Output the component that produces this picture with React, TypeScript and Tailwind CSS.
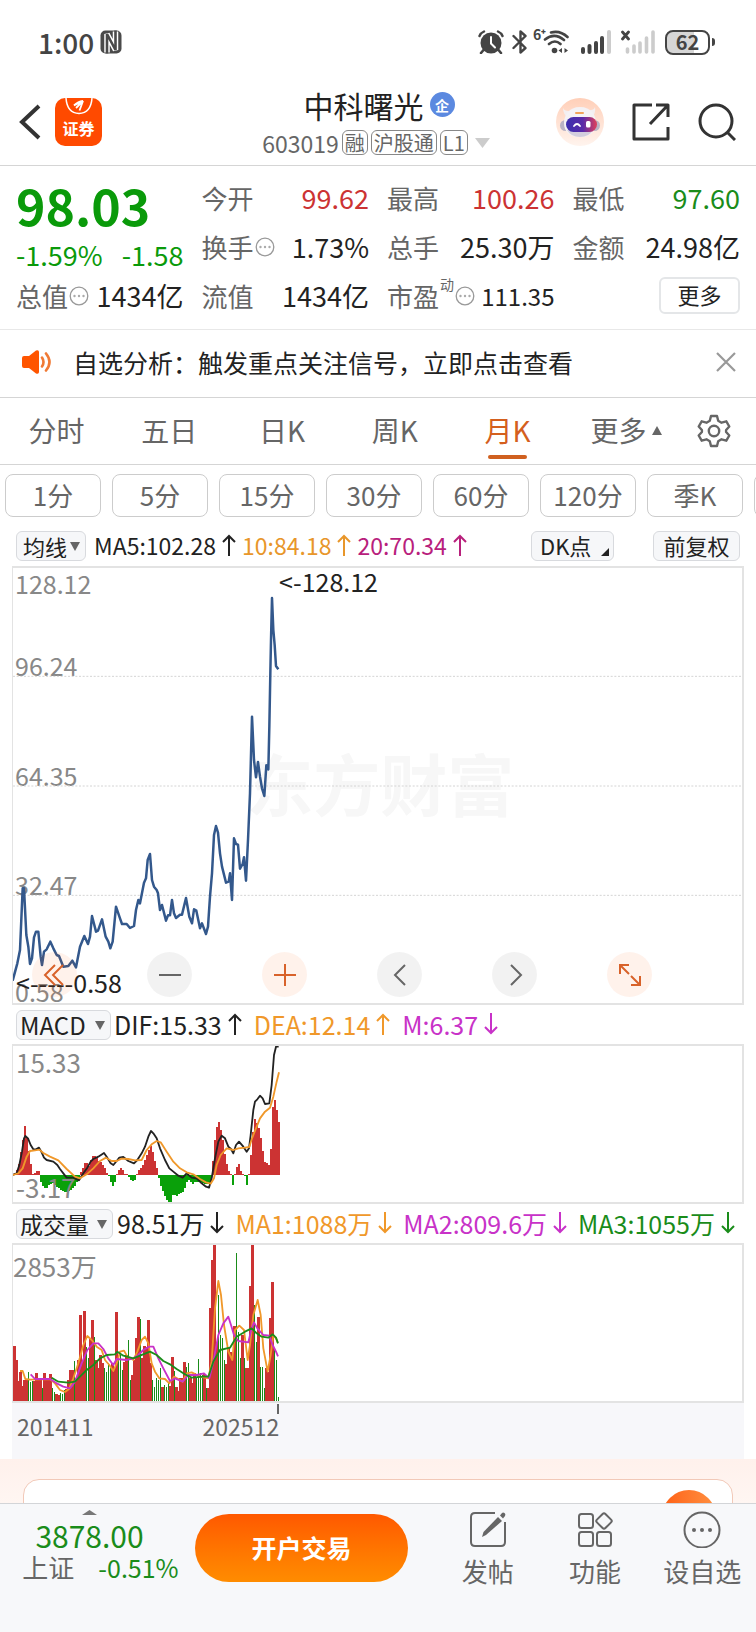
import React, { useState } from "react";
import clsx from "clsx";

type Bar = [number, "r" | "g"];

const periods = ["1分", "5分", "15分", "30分", "60分", "120分", "季K"];
const tabs = ["分时", "五日", "日K", "周K", "月K"];

// All chart data is kept in plot units, three per pixel, one month every 6 units
const pricePoints =
  "38,1262 52,1210 60,1170 68,985 72,985 79,1125 85,1160 90,1212 96,1195 102,1132 108,1115 115,1115 122,1190 126,1215 132,1175 140,1168 151,1145 160,1165 170,1185 177,1188 190,1220 205,1218 217,1202 228,1222 240,1160 253,1128 264,1152 270,1130 276,1068 288,1115 294,1112 306,1078 317,1130 325,1145 331,1165 338,1145 348,1040 360,1075 366,1092 380,1092 390,1104 402,1098 408,1050 415,1020 420,1030 432,968 438,955 443,900 450,882 456,960 462,980 470,990 474,1000 480,1050 486,1035 498,1082 504,1066 510,1066 516,1020 522,1060 528,1074 540,1064 546,1064 558,1014 568,1070 576,1090 582,1048 589,1052 600,1105 606,1090 618,1122 624,1100 630,1010 636,940 642,825 648,798 654,818 660,880 666,920 678,968 686,965 690,940 696,1020 702,835 708,852 714,854 720,926 728,912 732,892 738,962 744,840 750,700 756,470 762,600 768,652 774,606 780,650 786,685 793,708 799,616 805,628 808,500 811,340 813,240 816,114 820,210 824,255 828,318 835,328";

const macdBars = [
  4, 6, 14, 32, 68, 105, 147, 115, 72, 32, 4, 6, 12, 12, -22, -32, -38, -38,
  -30, -28, -25, -30, -36, -40, -45, -48, -50, -50, -48, -45, -40, -32, -22,
  -12, 10, 20, 36, 35, 28, 45, 56, 56, 52, 42, 40, 30, 22, 6, -3, -22, -32,
  -22, 3, 14, 22, 14, 4, 2, -6, -14, -17, -16, 2, 14, 20, 30, 45, 60, 74, 88,
  68, 42, 20, -8, -32, -48, -62, -76, -82, -80, -60, -60, -62, -58, -55, -50,
  -40, -22, -16, -22, -28, -22, -20, -20, -22, -24, -26, -28, -28, -20, 42,
  105, 145, 160, 135, 105, 62, 32, 12, 3, -30, 3, 24, 32, 12, 3, -3, -30, 2,
  60, 130, 168, 155, 140, 110, 72, 38, 36, 30, 78, 205, 225, 195, 160,
];

const difPoints =
  "38,510 50,505 58,480 66,440 72,400 76,393 84,400 92,420 100,433 108,433 117,428 124,440 132,458 140,465 160,470 172,480 180,492 190,505 200,518 220,518 237,526 250,505 262,488 272,470 280,462 295,455 312,444 320,455 332,475 340,480 350,468 358,458 370,456 385,468 402,475 412,465 425,445 435,425 445,395 453,378 460,385 470,400 480,430 495,465 508,490 520,500 535,512 548,518 560,505 575,518 590,520 605,535 618,545 627,548 635,520 645,460 655,410 665,392 675,400 685,425 693,432 700,445 708,420 717,410 730,425 740,440 747,430 752,390 760,315 765,290 772,283 780,272 788,280 795,297 808,295 815,240 822,150 828,125 836,125";

const deaPoints =
  "38,510 55,505 68,490 80,455 90,438 105,436 118,434 130,444 150,455 175,466 200,492 225,515 240,520 260,508 280,490 300,468 318,458 335,468 350,468 365,461 385,462 405,466 425,465 440,435 455,418 470,408 482,412 500,440 520,470 540,490 560,502 580,508 600,522 618,532 632,536 642,520 650,480 662,450 680,430 700,435 715,430 735,428 748,426 756,400 768,370 780,340 795,320 810,308 820,275 830,230 837,202";

const volumeBars: Bar[] = [
  [332, "r"], [332, "r"], [376, "r"], [438, "r"], [410, "r"], [453, "r"], [435, "r"], [436, "r"],
  [412, "g"], [440, "g"], [438, "g"], [438, "r"], [415, "r"], [435, "r"], [432, "r"], [458, "g"],
  [415, "r"], [432, "r"], [432, "r"], [418, "r"], [460, "g"], [470, "g"], [478, "r"], [480, "r"],
  [475, "g"], [478, "g"], [465, "g"], [462, "r"], [435, "r"], [405, "r"], [405, "r"], [378, "g"],
  [430, "r"], [375, "r"], [240, "r"], [375, "r"], [228, "r"], [335, "g"], [370, "g"], [312, "r"],
  [255, "r"], [305, "g"], [375, "r"], [400, "r"], [360, "r"], [385, "r"], [400, "g"], [412, "g"],
  [385, "g"], [400, "g"], [385, "r"], [400, "r"], [232, "r"], [370, "g"], [360, "g"], [405, "g"],
  [380, "r"], [360, "r"], [315, "g"], [435, "g"], [420, "r"], [375, "r"], [308, "r"], [245, "r"],
  [252, "g"], [370, "r"], [332, "r"], [335, "r"], [255, "r"], [385, "r"], [435, "g"], [455, "g"],
  [430, "g"], [435, "g"], [398, "g"], [455, "r"], [450, "g"], [455, "g"], [440, "g"], [452, "r"],
  [366, "r"], [408, "g"], [455, "r"], [468, "r"], [430, "r"], [430, "r"], [382, "r"], [395, "g"],
  [385, "g"], [430, "r"], [445, "r"], [415, "r"], [430, "g"], [373, "g"], [415, "g"], [420, "g"],
  [418, "r"], [458, "g"], [458, "r"], [220, "r"], [75, "r"], [28, "r"], [320, "r"], [180, "g"],
  [300, "g"], [310, "g"], [375, "g"], [388, "r"], [340, "r"], [350, "r"], [375, "r"], [272, "r"],
  [55, "g"], [290, "g"], [370, "g"], [300, "r"], [370, "g"], [400, "r"], [400, "r"], [152, "r"],
  [28, "r"], [210, "g"], [320, "g"], [245, "r"], [395, "g"], [395, "g"], [458, "g"], [400, "r"],
  [410, "r"], [250, "r"], [140, "r"], [345, "g"], [375, "g"], [485, "g"],
];

const volumeLines = [
  {
    color: "#f0982a",
    points:
      "60,408 68,408 76,432 90,434 150,432 165,445 180,465 195,471 207,462 220,430 235,385 250,330 262,303 275,315 290,335 305,345 315,375 328,390 340,408 352,380 360,350 372,347 382,365 400,375 412,350 425,315 435,305 445,325 455,385 465,410 478,430 495,432 508,445 522,425 548,440 560,415 575,412 600,425 625,430 635,380 645,220 655,138 663,180 672,270 685,350 697,375 705,285 718,272 732,285 743,375 750,330 760,240 773,195 782,240 790,340 803,410 812,360 820,300 828,310 833,322",
  },
  {
    color: "#c832c8",
    points:
      "92,418 105,432 150,432 170,445 190,455 210,460 225,440 245,385 262,345 280,325 295,325 310,342 325,370 340,390 350,372 380,375 400,370 415,360 430,345 448,335 460,335 475,370 490,400 510,438 525,430 548,440 565,420 590,420 612,415 628,430 640,380 655,300 670,265 685,245 693,270 702,300 715,318 745,322 755,280 762,262 772,280 790,300 808,302 818,330 828,350 834,364",
  },
  {
    color: "#1a8c1a",
    points:
      "155,428 175,440 205,443 225,440 240,425 260,405 280,390 300,370 320,360 345,358 352,350 370,362 400,370 420,362 450,350 470,360 490,378 510,388 530,402 550,415 575,428 610,425 625,425 640,380 660,345 690,338 710,305 735,290 755,280 770,295 785,305 805,308 818,298 828,308 834,325",
  },
];

export default function App() {
  return (
    <div className="flex min-h-screen flex-col overflow-hidden bg-white font-['Noto_Sans_CJK_SC',sans-serif] text-[#222]">
      <StatusBar />
      <Header />
      <Quote />
      <Notice />
      <ChartTabs />
      <Periods />
      <main className="px-3">
        <PricePanel />
        <MacdPanel />
        <VolumePanel />
      </main>
      <Promo />
      <BottomBar />
    </div>
  );
}

const StatusBar = () => (
  <div className="flex h-20 items-center justify-between pt-1 pr-[41px] pl-[38px] text-[#444]">
    <div className="flex items-center gap-1.5">
      <span className="text-[28px] leading-8 font-medium">1:00</span>
      <svg width="22" height="24" viewBox="0 0 22 24">
        <defs>
          <clipPath id="nfc">
            <rect x="0.500" y="0.500" width="21" height="23" rx="5" />
          </clipPath>
        </defs>
        <g clipPath="url(#nfc)" fill="none">
          <rect width="22" height="24" fill="#4a4a4a" />
          <path d="M7 22.500V4l8.500 16V1.500" stroke="#fff" strokeWidth="5.500" />
          <path d="M7 24V4l8.500 16V0" stroke="#4a4a4a" strokeWidth="2.600" />
        </g>
      </svg>
    </div>
    <div className="flex items-center gap-2">
      <svg width="26" height="24" viewBox="0 0 26 24" fill="none" stroke="#444">
        <circle cx="13" cy="13" r="10.500" fill="#444" stroke="none" />
        <path d="M1.500 6Q2.500 3 6 1.500M24.500 6Q23.500 3 20 1.500" strokeWidth="2.400" strokeLinecap="round" />
        <path d="M5.500 20l-2.500 3M20.500 20l2.500 3" strokeWidth="2.600" strokeLinecap="round" />
        <path d="M13 7v6.500l4 4" stroke="#fff" strokeWidth="2" strokeLinecap="round" />
      </svg>
      <svg width="15" height="24" viewBox="0 0 15 24" fill="none" stroke="#444" strokeWidth="2.400" strokeLinejoin="round" strokeLinecap="round">
        <path d="M1.500 6l12 12-5 4.500v-21l5 4.500-12 12" />
      </svg>
      <div className="relative ml-2">
        <span className="absolute -top-1 -left-2.5 text-sm leading-4 font-bold">6⁺</span>
        <svg width="26" height="24" viewBox="0 0 26 24" fill="none" stroke="#444" strokeWidth="2.600" strokeLinecap="round">
          <path d="M8 2.500Q17 0 24.500 7M2 9.500Q11.500 2 21 10M6 14Q12 9 17.500 14" />
          <circle cx="11.500" cy="20.500" r="2.800" fill="#444" stroke="none" />
          <path d="M19 18v5l-3.500-2.500zM21.500 18v5l3.500-2.500z" fill="#444" stroke="none" />
        </svg>
      </div>
      <svg className="ml-1" width="30" height="24" viewBox="0 0 30 24" strokeWidth="4" strokeLinecap="round">
        <path d="M2 19v3M8.500 16v6M15 13v9M21 8v14" stroke="#444" />
        <path d="M28 2v20" stroke="#ccc" />
      </svg>
      <svg className="mx-0.5" width="34" height="24" viewBox="0 0 34 24" strokeLinecap="round">
        <path d="M1.500 2l6 7M7.500 2l-6 7" stroke="#444" strokeWidth="2.800" />
        <path d="M6.500 19v3M13 16v6M19 13v9M25.500 8v14M32 2v20" stroke="#ccc" strokeWidth="3.600" />
      </svg>
      <div className="flex items-center gap-0.5">
        <div className="flex h-[25px] w-[45px] items-center justify-center rounded-lg border-2 border-[#444] bg-linear-to-r from-[#d6d6d6] from-65% to-white to-65% text-[20px] leading-5 font-bold">
          62
        </div>
        <div className="h-2 w-[3px] rounded-r bg-[#444]" />
      </div>
    </div>
  </div>
);

const Header = () => (
  <header className="grid h-[86px] grid-cols-[1fr_auto_1fr] items-center border-b border-[#d5d5d5] pr-5 pb-0.5 pl-4">
    <div className="flex items-center gap-3.5">
      <button aria-label="返回">
        <svg width="25" height="36" viewBox="0 0 25 36" fill="none" stroke="#333" strokeWidth="4">
          <path d="M23 2L6 18l17 16" />
        </svg>
      </button>
      <button className="relative flex h-12 w-[47px] justify-center overflow-hidden rounded-[10px] bg-[#ff4a00] pt-4 text-white">
        <svg className="absolute top-0" width="28" height="17" viewBox="0 0 28 17" fill="none" stroke="#fff" strokeWidth="1.500">
          <path d="M1 0q1 15 13 15.500Q26 15 27 0" />
          <path d="M9 7.500q4-4 9-4.500l-9 4.500M11 10l7-7-3.500 9.500" strokeWidth="1.800" />
        </svg>
        <span className="text-base leading-7 font-bold">证券</span>
      </button>
    </div>
    <div className="flex flex-col items-center gap-1.5">
      <div className="flex items-center gap-1.5 pl-1.5">
        <h1 className="text-[30px] leading-9">中科曙光</h1>
        <span className="flex size-[25px] items-center justify-center rounded-full bg-[#5b89e0] text-sm leading-4 font-bold text-white">
          企
        </span>
      </div>
      <div className="flex items-center gap-[3px] text-[#666]">
        <span className="text-[23px] leading-7">603019</span>
        {["融", "沪股通", "L1"].map((tag) => (
          <span
            key={tag}
            className="flex h-[25px] items-center rounded-md border border-[#888] px-0.5 text-[20px] leading-5"
          >
            {tag}
          </span>
        ))}
        <svg className="ml-1" width="15" height="10" viewBox="0 0 15 10">
          <path d="M0 0h15L7.500 10z" fill="#ccc" />
        </svg>
      </div>
    </div>
    <div className="flex items-center justify-end gap-7">
      <button aria-label="智能助手">
        <svg width="48" height="48" viewBox="0 0 48 48">
          <defs>
            <linearGradient id="halo" x1="0" y1="0" x2="0" y2="1">
              <stop offset="0" stopColor="#ffcfb8" />
              <stop offset="1" stopColor="#fff4ee" />
            </linearGradient>
            <linearGradient id="visor">
              <stop offset="0" stopColor="#3b2fae" />
              <stop offset="0.550" stopColor="#5a2aa8" />
              <stop offset="1" stopColor="#e0405a" />
            </linearGradient>
          </defs>
          <circle cx="24" cy="24" r="24" fill="url(#halo)" />
          <path d="M7 10q0 6 5 10l5-7q-8 1-10-3zM39 9q1 6-3 10l-6-7q8 1 9-3z" fill="#f3eff1" />
          <rect x="4" y="22" width="40" height="11" rx="5.500" fill="#b9b3c4" />
          <path d="M24 9C13 9 8 17 8 25s5 14 16 14 16-6 16-14S35 9 24 9z" fill="#f4f2f5" />
          <path d="M11 32q4 7 13 7t13-7z" fill="#d3cedd" />
          <rect x="19" y="14" width="9" height="2" rx="1" fill="#f0a35c" />
          <rect x="10" y="19" width="31" height="15" rx="7.500" fill="url(#visor)" />
          <path d="M18 28q3-4 6 0" fill="none" stroke="#fff" strokeWidth="1.800" strokeLinecap="round" />
          <rect x="30" y="23" width="4.500" height="6.500" rx="1.500" fill="#fff" />
        </svg>
      </button>
      <button aria-label="分享">
        <svg width="38" height="38" viewBox="0 0 38 38" fill="none" stroke="#333" strokeWidth="3">
          <path d="M20 2H2v34h34V24M24 2h12v12M36 2L18 21" strokeLinejoin="round" />
        </svg>
      </button>
      <button aria-label="搜索">
        <svg width="38" height="38" viewBox="0 0 38 38" fill="none" stroke="#333" strokeWidth="3">
          <circle cx="18" cy="18" r="16" />
          <path d="M29 29l8 8" />
        </svg>
      </button>
    </div>
  </header>
);

const Dots = () => (
  <svg width="20" height="20" viewBox="0 0 20 20" fill="#aaa">
    <circle cx="10" cy="10" r="8.800" fill="none" stroke="#999" strokeWidth="1.300" />
    <circle cx="5.500" cy="10" r="1.200" />
    <circle cx="10" cy="10" r="1.200" />
    <circle cx="14.500" cy="10" r="1.200" />
  </svg>
);

interface CellProps {
  label: string;
  value: string;
  tone?: string;
  dots?: boolean;
}

const Cell = ({ label, value, tone, dots }: CellProps) => (
  <div className="flex items-center justify-between whitespace-nowrap">
    <span className="flex items-center gap-px text-[26px] text-[#666]">
      {label}
      {dots && <Dots />}
    </span>
    <span className={clsx("text-[27px]", tone)}>{value}</span>
  </div>
);

const Quote = () => (
  <section className="grid grid-cols-4 grid-rows-[49px_49px_49px] gap-x-[18px] border-b border-[#e8e8e8] px-4 pt-[7px] pb-[9px] leading-8">
    <div className="row-span-2 flex flex-col justify-between text-[#0a9a0a]">
      <strong className="pt-1 text-[50px] leading-[54px] font-bold">98.03</strong>
      <div className="flex justify-between text-[27px] leading-8 whitespace-nowrap">
        <span>-1.59%</span>
        <span>-1.58</span>
      </div>
    </div>
    <Cell label="今开" value="99.62" tone="text-[#cc3333]" />
    <Cell label="最高" value="100.26" tone="text-[#cc3333]" />
    <Cell label="最低" value="97.60" tone="text-[#1a8c1a]" />
    <Cell label="换手" value="1.73%" dots />
    <Cell label="总手" value="25.30万" />
    <Cell label="金额" value="24.98亿" />
    <Cell label="总值" value="1434亿" dots />
    <Cell label="流值" value="1434亿" />
    <div className="flex items-center justify-between whitespace-nowrap">
      <span className="flex items-center gap-px text-[26px] text-[#666]">
        市盈
        <sup className="-top-3 text-sm leading-4">动</sup>
        <Dots />
      </span>
      <span className="text-[24px]">111.35</span>
    </div>
    <button className="h-[37px] w-[81px] self-center justify-self-end rounded-md border-2 border-[#e4e6e8] pb-1 text-[22px] leading-7">
      更多
    </button>
  </section>
);

const Notice = () => {
  const [open, setOpen] = useState(true);
  if (!open) return null;
  return (
    <div className="flex h-[68px] items-center border-b border-[#d5d5d5] pr-5 pb-1 pl-[22px]">
      <svg width="30" height="24" viewBox="0 0 30 24">
        <path d="M0 8q0-2 2-2h5l7-5.500q3-1 3 1.500v20q0 2.500-3 1.500L7 18H2q-2 0-2-2z" fill="#ff5500" />
        <path d="M20 7.500q3 4.500 0 9M24 3.500q7 8.500 0 17" fill="none" stroke="#f07a35" strokeWidth="2.600" strokeLinecap="round" />
      </svg>
      <p className="ml-[21px] flex-1 text-[25px] leading-9">自选分析：触发重点关注信号，立即点击查看</p>
      <button aria-label="关闭" onClick={() => setOpen(false)}>
        <svg width="20" height="20" viewBox="0 0 20 20" stroke="#999" strokeWidth="2.200">
          <path d="M1 1l18 18M19 1L1 19" />
        </svg>
      </button>
    </div>
  );
};

const ChartTabs = () => {
  const [active, setActive] = useState("月K");
  return (
    <nav className="flex h-[67px] border-b border-[#d5d5d5] pr-1 text-[28px] leading-9 text-[#666]">
      {tabs.map((tab) => (
        <button
          key={tab}
          onClick={() => setActive(tab)}
          className={clsx("relative flex-3 pb-0.5", active === tab && "text-[#d45f1e]")}
        >
          {tab}
          {active === tab && (
            <span className="absolute inset-x-0 bottom-[5px] mx-auto h-1 w-[39px] rounded-full bg-[#d0601f]" />
          )}
        </button>
      ))}
      <button className="flex flex-3 items-center justify-center gap-1.5 pb-0.5">
        <span className="ml-3">更多</span>
        <svg width="10" height="9" viewBox="0 0 10 9">
          <path d="M5 0l5 9H0z" fill="#666" />
        </svg>
      </button>
      <button aria-label="设置" className="flex flex-2 items-center justify-center">
        <svg width="34" height="34" viewBox="0 0 34 34" fill="none" stroke="#666" strokeWidth="2.400" strokeLinejoin="round">
          <path d="M14 2h6l1.200 4.800 3.300 1.900 4.800-1.400 3 5.200-3.200 3.500v2l3.200 3.500-3 5.200-4.800-1.400-3.300 1.900L20 32h-6l-1.200-4.800-3.300-1.900-4.800 1.400-3-5.200L4.900 18v-2l-3.200-3.500 3-5.200 4.800 1.400 3.300-1.900z" />
          <circle cx="17" cy="17" r="5.200" />
        </svg>
      </button>
    </nav>
  );
};

const Periods = () => (
  <div className="flex gap-[11px] overflow-hidden pt-[9px] pl-[5px]">
    {periods.map((p) => (
      <button
        key={p}
        className="h-[43px] w-24 shrink-0 rounded-lg border border-[#ccc] pb-0.5 text-[26px] leading-9 text-[#666]"
      >
        {p}
      </button>
    ))}
    <button aria-label="年K" className="h-[43px] w-24 shrink-0 rounded-lg border border-[#ccc]" />
  </div>
);

const Picker = ({ name, size }: { name: string; size: string }) => (
  <div className="relative flex h-[30px] items-center">
    <select
      aria-label={name}
      className={clsx(
        "h-[30px] appearance-none rounded-md border border-[#d8dade] bg-[#f6f7f9] pb-0.5 leading-7",
        size
      )}
    >
      <option>{name}</option>
    </select>
    <svg className="pointer-events-none absolute right-1.5" width="10" height="9" viewBox="0 0 10 9">
      <path d="M0 0h10L5 9z" fill="#666" />
    </svg>
  </div>
);

const Arrow = ({ down }: { down?: boolean }) => (
  <svg className="ml-1.5" width="14" height="22" viewBox="0 0 14 22" fill="none" stroke="currentColor" strokeWidth="2">
    <path d={down ? "M7 0v20M1 14l6 6 6-6" : "M7 22V2M1 8l6-6 6 6"} />
  </svg>
);

interface ReadingProps {
  children: React.ReactNode;
  tone?: string;
  down?: boolean;
}

const Reading = ({ children, tone, down }: ReadingProps) => (
  <span className={clsx("flex items-center whitespace-nowrap", tone)}>
    {children}
    <Arrow down={down} />
  </span>
);

const RoundButton = ({ label, warm, d }: { label: string; warm?: boolean; d: string }) => (
  <button
    aria-label={label}
    className={clsx(
      "flex size-[45px] items-center justify-center rounded-full",
      warm ? "bg-[#ff5500]/8 text-[#d8622a]" : "bg-black/5 text-[#666]"
    )}
  >
    <svg width="24" height="24" viewBox="0 0 24 24" fill="none" stroke="currentColor" strokeWidth="2">
      <path d={d} />
    </svg>
  </button>
);

const PricePanel = () => (
  <section>
    <div className="flex items-center pt-3.5 pr-1 pb-[5px] pl-1 text-[22px] leading-[30px]">
      <Picker name="均线" size="w-[70px] pl-1.5 text-[22px]" />
      <div className="ml-2 flex flex-1 gap-1.5 pb-0.5 text-[23px] leading-7">
        <Reading>MA5:102.28</Reading>
        <Reading tone="text-[#e8962a]">10:84.18</Reading>
        <Reading tone="text-[#b8207c]">20:70.34</Reading>
      </div>
      <button className="relative mr-[39px] h-[30px] w-[83px] rounded-md border border-[#d8dade] bg-[#f6f7f9] pb-0.5 pl-2 text-left leading-[26px]">
        DK点
        <svg className="absolute right-1 bottom-1" width="8" height="8" viewBox="0 0 8 8">
          <path d="M8 0v8H0z" fill="#222" />
        </svg>
      </button>
      <button className="h-[30px] w-[87px] rounded-md border border-[#d8dade] bg-[#f6f7f9] pb-0.5 leading-[26px]">
        前复权
      </button>
    </div>
    <div className="relative h-[439px] border-2 border-l border-[#e3e3e3] text-[25px] leading-6 text-[#888]">
      <div className="absolute top-[178px] left-[32%] text-[67px] leading-[72px] font-bold whitespace-nowrap text-[#f7f7f7]">
        东方财富
      </div>
      <span className="absolute top-[3px] left-0.5">128.12</span>
      <span className="absolute top-[85px] left-0.5">96.24</span>
      <span className="absolute top-[195px] left-0.5">64.35</span>
      <span className="absolute top-[304px] left-0.5">32.47</span>
      <span className="absolute top-[411px] left-0.5">0.58</span>
      <svg className="absolute inset-0 size-full" viewBox="39 24 2187 1305" preserveAspectRatio="none">
        {[349, 678, 1006].map((y) => (
          <path key={y} d={`M39 ${y}H2226`} stroke="#d4d4d4" strokeWidth="3" strokeDasharray="6 5" />
        ))}
        <polyline points={pricePoints} fill="none" stroke="#33588c" strokeWidth="7.500" strokeLinejoin="round" />
      </svg>
      <span className="absolute top-px left-[36.5%] text-[#222]">&lt;-128.12</span>
      <span className="absolute top-[402px] left-[3px] text-[#222]">&lt;-----0.58</span>
      <div className="absolute bottom-1.5 left-[19px] flex gap-[70px]">
        <RoundButton label="最早" warm d="M12 2L2 12l10 10M20 2L10 12l10 10" />
        <RoundButton label="缩小" d="M1 12h22" />
        <RoundButton label="放大" warm d="M1 12h22M12 1v22" />
        <RoundButton label="向左" d="M17 2L7 12l10 10" />
        <RoundButton label="向右" d="M8 2l10 10L8 22" />
        <RoundButton label="全屏" warm d="M11 2H2v9M2 2l9 9M13 22h9v-9M22 22l-9-9" />
      </div>
    </div>
  </section>
);

const MacdPanel = () => (
  <section>
    <div className="flex items-center gap-[3px] pt-[5px] pb-1 pl-1 leading-[30px]">
      <Picker name="MACD" size="w-[95px] pl-[3px] text-[24px]" />
      <div className="flex gap-3 pb-0.5 text-[25px] leading-7">
        <Reading>DIF:15.33</Reading>
        <Reading tone="text-[#f0982a]">DEA:12.14</Reading>
        <Reading tone="text-[#c832c8]" down>M:6.37</Reading>
      </div>
    </div>
    <div className="relative h-40 border-2 border-l border-[#e3e3e3] text-[26px] leading-6 text-[#888]">
      <svg className="absolute inset-0 size-full" viewBox="39 123 2187 468" preserveAspectRatio="none">
        {macdBars.map((v, i) => (
          <rect
            key={i}
            x={36 + i * 6}
            y={v > 0 ? 510 - v : 510}
            width="6"
            height={Math.abs(v)}
            fill={v > 0 ? "#cc3333" : "#0aa00a"}
            shapeRendering="crispEdges"
          />
        ))}
        <polyline points={difPoints} fill="none" stroke="#222" strokeWidth="5.500" strokeLinejoin="round" />
        <polyline points={deaPoints} fill="none" stroke="#f0982a" strokeWidth="5.500" strokeLinejoin="round" />
      </svg>
      <span className="absolute top-1 left-[3px]">15.33</span>
      <span className="absolute bottom-[3px] left-[3px]">-3.17</span>
    </div>
  </section>
);

const VolumePanel = () => (
  <section>
    <div className="flex items-center gap-1 pt-[5px] pb-1 pl-1 leading-[30px]">
      <Picker name="成交量" size="w-[97px] pl-[3px] text-[23px]" />
      <div className="flex gap-[11px] pb-0.5 text-[25px] leading-7">
        <Reading down>98.51万</Reading>
        <Reading tone="text-[#f0982a]" down>MA1:1088万</Reading>
        <Reading tone="text-[#c832c8]" down>MA2:809.6万</Reading>
        <Reading tone="text-[#1a8c1a]" down>MA3:1055万</Reading>
      </div>
    </div>
    <div className="relative h-40 border-2 border-l border-[#e3e3e3] text-[26px] leading-6 text-[#888]">
      <svg className="absolute inset-0 size-full" viewBox="39 30 2187 468" preserveAspectRatio="none">
        {volumeBars.map(([top, kind], i) => (
          <rect
            key={i}
            x={kind === "r" ? 34 + i * 6 : 36 + i * 6}
            y={top}
            width={kind === "r" ? 8 : 3}
            height={498 - top}
            fill={kind === "r" ? "#cc3333" : "#1a8c1a"}
            shapeRendering="crispEdges"
          />
        ))}
        {volumeLines.map((line) => (
          <polyline
            key={line.color}
            points={line.points}
            fill="none"
            stroke={line.color}
            strokeWidth="5.500"
            strokeLinejoin="round"
          />
        ))}
      </svg>
      <span className="absolute top-[9px] left-0">2853万</span>
    </div>
    <div className="h-14 bg-[#f7f7fa]">
      <div className="relative flex w-[36.5%] justify-between pt-[9px] pl-[5px] text-[23px] leading-7 text-[#666]">
        <span>201411</span>
        <span>202512</span>
        <i className="absolute top-px right-0 h-2.5 w-0.5 bg-[#666]" />
      </div>
    </div>
  </section>
);

const Promo = () => (
  <div className="h-11 overflow-hidden bg-linear-to-b from-[#fff1ec] to-[#fff6f2] px-[23px] pt-5">
    <div className="flex h-16 justify-end rounded-t-2xl border border-[#f2c9b8] bg-white pt-2.5 pr-4">
      <div className="size-[54px] rounded-full bg-linear-to-r from-[#ff5f10] to-[#ff9040]" />
    </div>
  </div>
);

const BottomBar = () => (
  <footer className="flex flex-1 items-start border-t border-[#d3d5d8] bg-[#f7f8fa] pt-1.5 pb-[47px] text-[#666]">
    <button className="flex w-[195px] shrink-0 flex-col items-center">
      <svg className="mr-4" width="15" height="5" viewBox="0 0 15 5">
        <path d="M7.500 0L15 5H0z" fill="#777" />
      </svg>
      <span className="mt-0.5 mr-4 text-[30px] leading-9 text-[#1a8c1a]">3878.00</span>
      <span className="ml-1.5 flex items-center gap-6 text-[26px] leading-7">
        上证
        <span className="text-[25px] text-[#1a8c1a]">-0.51%</span>
      </span>
    </button>
    <button className="mt-1 h-[68px] w-[213px] shrink-0 rounded-full bg-linear-to-b from-[#ff5800] to-[#ff8c00] pb-0.5 text-[25px] leading-9 font-bold text-white">
      开户交易
    </button>
    <div className="ml-[26px] flex flex-1 text-[26px] leading-9 whitespace-nowrap">
      <button className="flex flex-1 flex-col items-center gap-[5px]">
        <svg width="38" height="38" viewBox="0 0 38 38" fill="none" stroke="#666" strokeWidth="2">
          <path d="M26 3H6Q2 3 2 7v25q0 4 4 4h26q4 0 4-4V12" />
          <path d="M29 7l4 4-16 14-4 2 1.500-5z" fill="#666" stroke="none" />
          <path d="M31 5.500l2-2.500q1-1 2.500 0t.500 3L34 8.500z" fill="#666" stroke="none" />
        </svg>
        发帖
      </button>
      <button className="flex flex-1 flex-col items-center gap-[5px]">
        <svg width="38" height="38" viewBox="0 0 38 38" fill="none" stroke="#666" strokeWidth="2">
          <rect x="3" y="4" width="14" height="14" rx="2.500" />
          <rect x="3" y="22" width="14" height="14" rx="2.500" />
          <rect x="21" y="22" width="14" height="14" rx="2.500" />
          <rect x="22" y="5" width="12" height="12" rx="2" transform="rotate(45 28 11)" />
        </svg>
        功能
      </button>
      <button className="flex flex-1 flex-col items-center gap-[5px]">
        <svg width="38" height="38" viewBox="0 0 38 38" fill="#666">
          <circle cx="19" cy="20" r="17.500" fill="none" stroke="#666" strokeWidth="2" />
          <circle cx="11" cy="20" r="2" />
          <circle cx="19" cy="20" r="2" />
          <circle cx="27" cy="20" r="2" />
        </svg>
        设自选
      </button>
    </div>
  </footer>
);
